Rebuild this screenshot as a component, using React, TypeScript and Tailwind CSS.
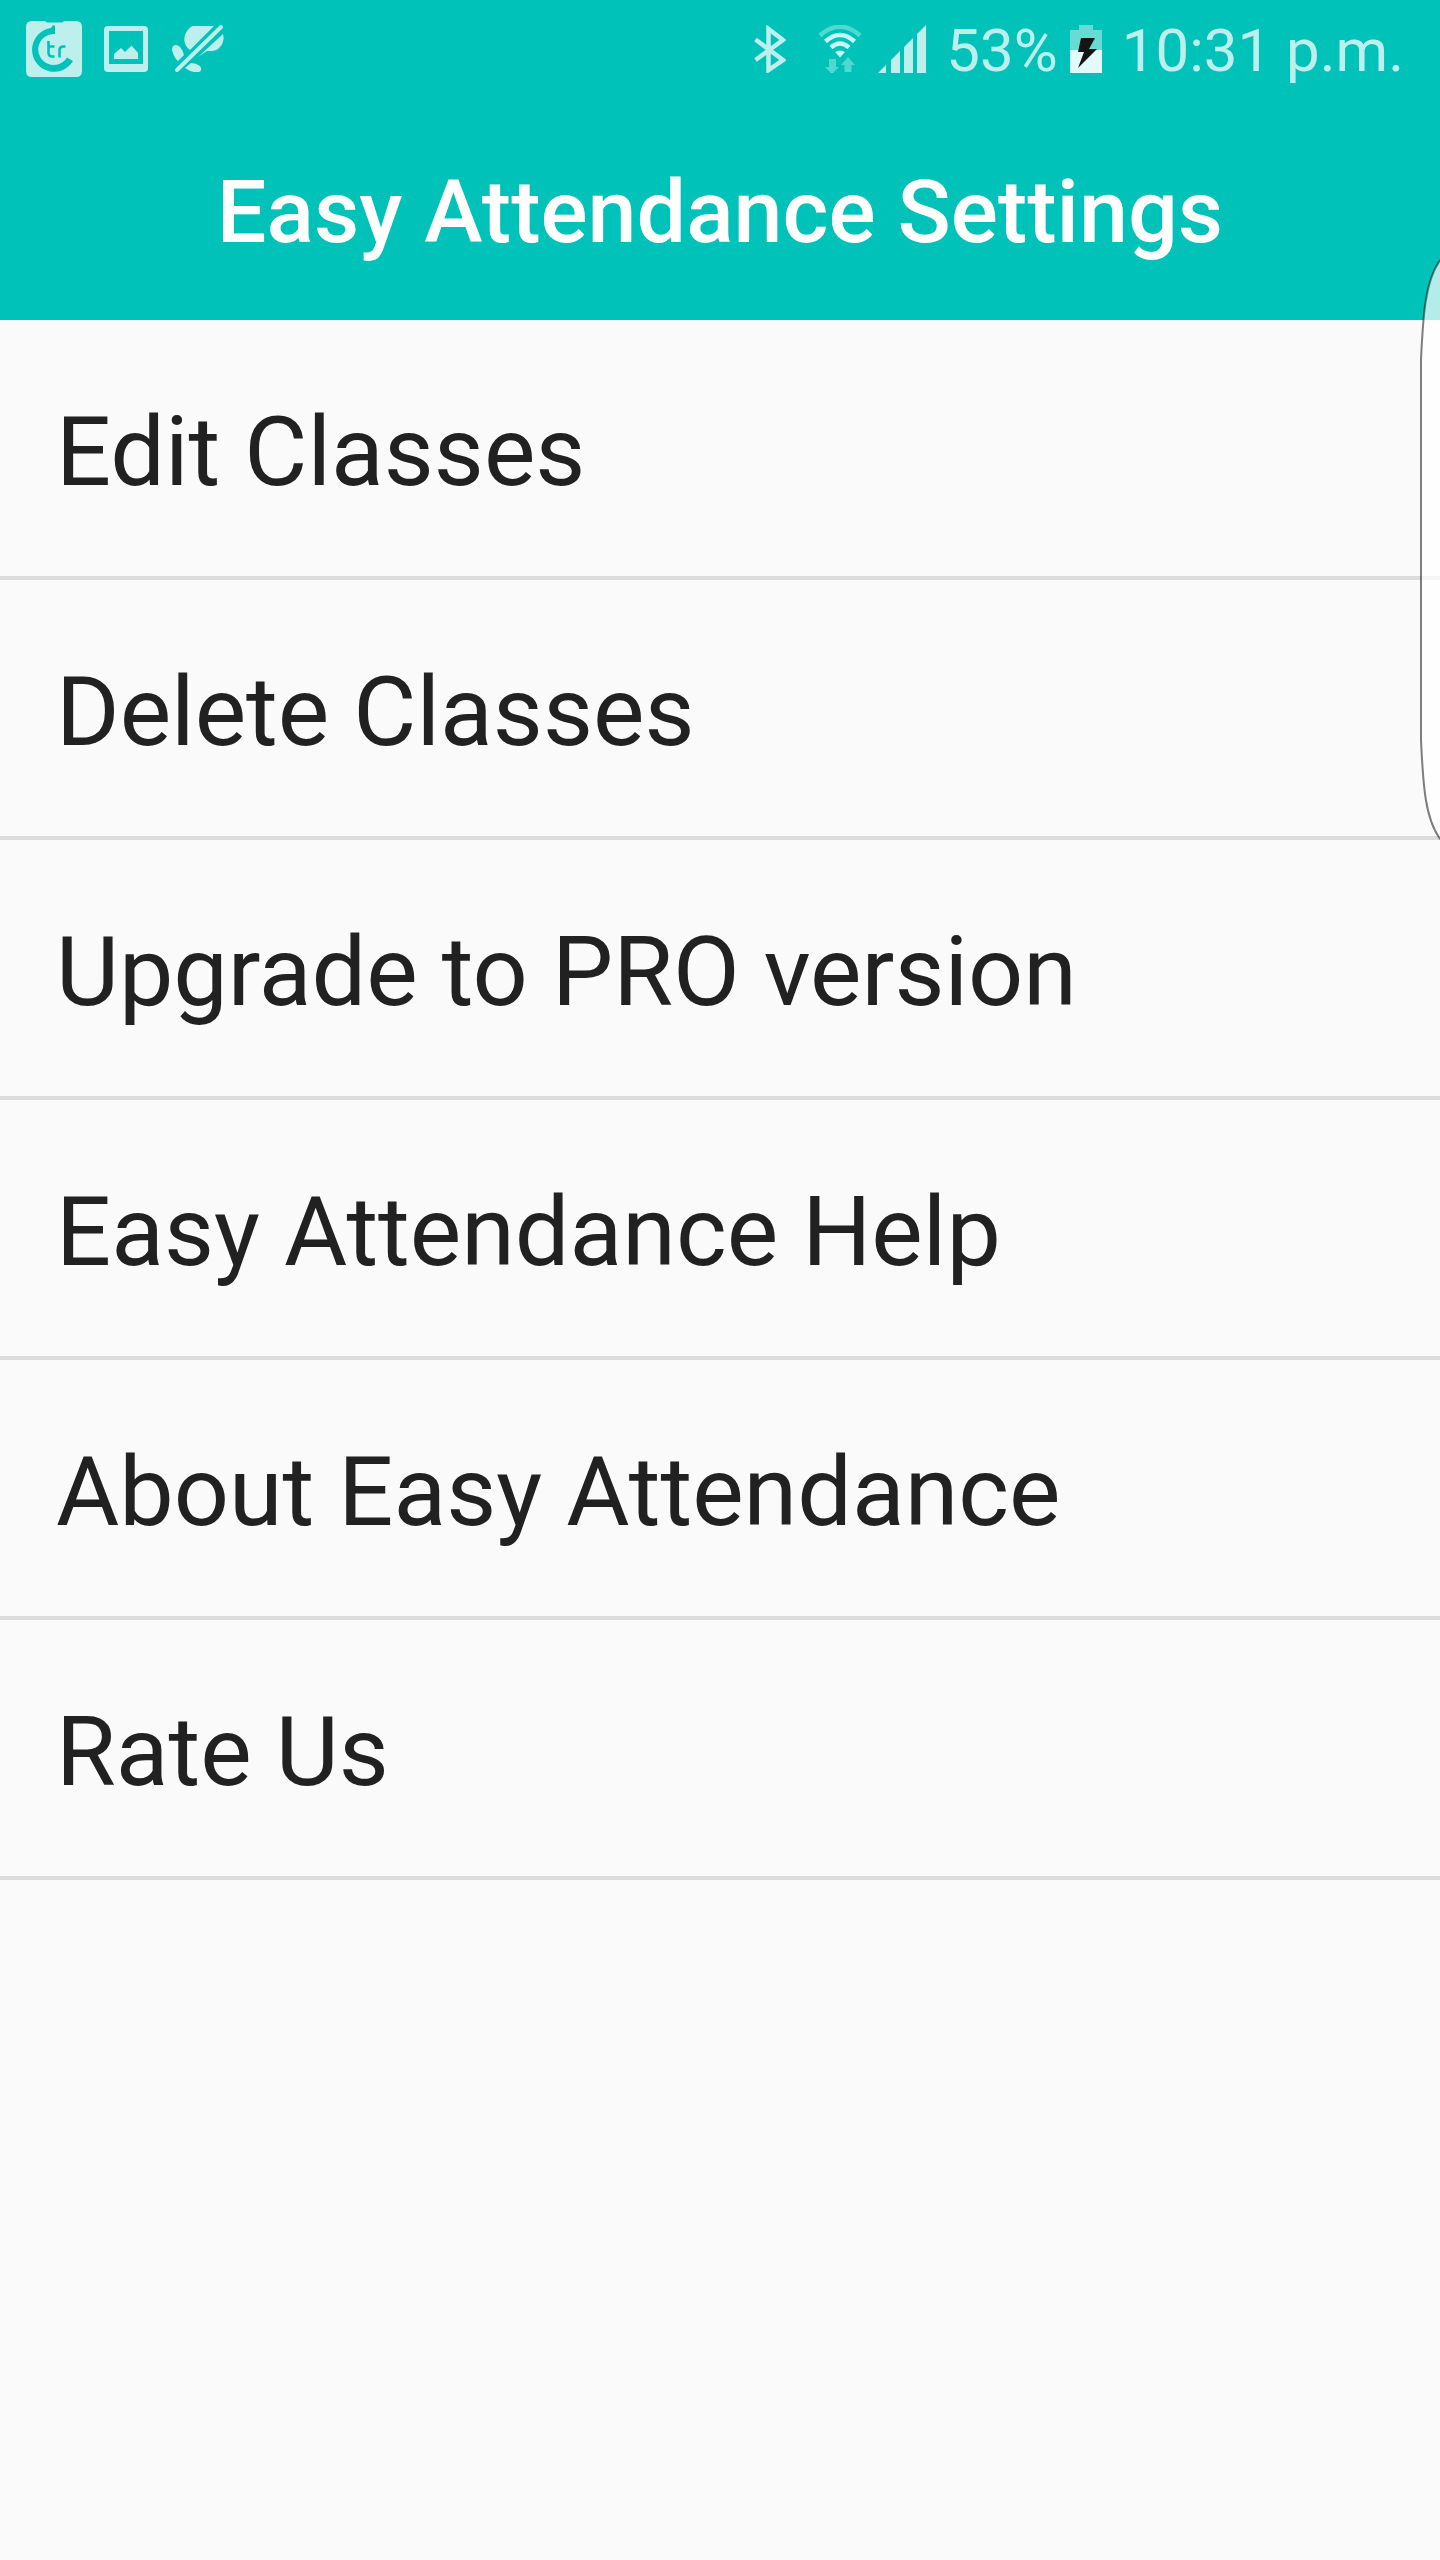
import React from "react";

const settings = [
  "Edit Classes",
  "Delete Classes",
  "Upgrade to PRO version",
  "Easy Attendance Help",
  "About Easy Attendance",
  "Rate Us",
];

function TrackerIcon() {
  return (
    <svg className="h-14 w-14 shrink-0" viewBox="0 0 56 56" aria-hidden="true">
      <path
        d="M6 0H19Q20 1.5 22 1.5H35Q37 1.5 38 0H50Q56 0 56 6V50Q56 56 50 56H6Q0 56 0 50V6Q0 0 6 0Z"
        fill="#bdf0ed"
      />
      <path
        d="M27 4L29 5V13A15.5 15.5 0 1 0 41 36.5L47 40A22 22 0 1 1 25 7Z"
        fill="#00c2b8"
      />
      <path
        d="M22.5 20V31.5Q22.5 35.5 26.5 35.5H28.5M22.5 25.5H28.5M33.5 36.5V29.5Q33.5 25.5 37.5 25.5H39.5"
        fill="none"
        stroke="#00c2b8"
        strokeWidth="2.6"
      />
    </svg>
  );
}

function PictureIcon() {
  return (
    <svg className="h-14 w-11 shrink-0" viewBox="0 0 44 56" aria-hidden="true">
      <path
        fillRule="evenodd"
        d="M4 5H40Q44 5 44 9V47Q44 51 40 51H4Q0 51 0 47V9Q0 5 4 5ZM5 10V43H39V10Z"
        fill="#bdf0ed"
      />
      <path d="M10 38V33L17 27L21 31L27.5 24.5L34 32V38Z" fill="#bdf0ed" />
    </svg>
  );
}

function SilencedIcon() {
  return (
    <svg className="h-14 w-13 shrink-0" viewBox="0 0 52 56" aria-hidden="true">
      <g fill="#bdf0ed">
        <path d="M22 5H42L18 29C11 24 11 16 15 10C17 7 19 5 22 5Z" />
        <path d="M51 13Q53 20 48 26Q45 30 39 30H35Q30 33 26 36Z" />
        <path d="M4 24Q9 24 12 34L6 40Q2 37 0 29Q0 24 4 24Z" />
        <path d="M19 42Q24 42 28 45Q31 49 27 51H22Q17 50 13 47Z" />
      </g>
      <path d="M5 49L49 6" stroke="#bdf0ed" strokeWidth="4" strokeLinecap="round" />
    </svg>
  );
}

function BluetoothIcon() {
  return (
    <svg className="h-12 w-8 shrink-0" viewBox="0 0 32 48" aria-hidden="true">
      <path
        d="M1.5 14.5L29 35L14.5 45V4L29 15L1.5 35"
        fill="none"
        stroke="#bdf0ed"
        strokeWidth="4.5"
      />
    </svg>
  );
}

function WifiIcon() {
  return (
    <svg className="h-12 w-11 shrink-0" viewBox="0 0 44 48" aria-hidden="true">
      <g fill="none" strokeWidth="4.5">
        <path d="M2 10.5Q22 -7 42 10.5" stroke="#4fd9d0" />
        <path d="M7.5 16.5Q22 3.5 36.5 16.5" stroke="#c8f8f5" />
        <path d="M13 22.5Q22 14.5 31 22.5" stroke="#c8f8f5" />
      </g>
      <path d="M17 27Q22 24 27 27L22 32.5Z" fill="#c8f8f5" />
      <path
        d="M11 34H18V42H21L14 49L7 42H11ZM23 40L30 32L37 40H33.5V47H26.5V40Z"
        fill="#4fd9d0"
      />
    </svg>
  );
}

function SignalIcon() {
  return (
    <svg className="h-12 w-12 shrink-0" viewBox="0 0 48 48" aria-hidden="true">
      <path
        d="M0 48L8 40V48ZM13 48V35L22 26V48ZM26 48V22L35 13V48ZM39 48V9L48 0V48Z"
        fill="#bdf0ed"
      />
    </svg>
  );
}

function BatteryIcon() {
  return (
    <svg className="h-12 w-8 shrink-0" viewBox="0 0 32 48" aria-hidden="true">
      <path d="M0 5H9V0H23V5H32V25H0Z" fill="#66dcd5" />
      <path d="M0 25H32V48H0Z" fill="#e3fafa" />
      <path d="M11 13H25L19 24H27L8 43L14 27H8Z" fill="#151515" />
    </svg>
  );
}

function StatusBar() {
  return (
    <div className="flex h-24 items-center justify-between pt-0.5 pr-9 pl-6.5 text-[60px] leading-none text-[#bdf0ed]">
      <div className="flex items-center gap-5.5">
        <TrackerIcon />
        <PictureIcon />
        <div className="ml-0.5">
          <SilencedIcon />
        </div>
      </div>
      <div className="flex items-center">
        <div className="mr-5 flex items-center gap-4">
          <div className="mr-4">
            <BluetoothIcon />
          </div>
          <WifiIcon />
          <SignalIcon />
        </div>
        <span className="mr-3 pt-1">53%</span>
        <BatteryIcon />
        <time className="ml-5 pt-1" dateTime="22:31">
          10:31 p.m.
        </time>
      </div>
    </div>
  );
}

function EdgeHandle() {
  return (
    <svg
      className="pointer-events-none absolute top-64 right-0 h-[588px] w-5"
      viewBox="0 0 20 588"
      aria-hidden="true"
    >
      <path
        d="M21 3C5 24 3 60 1 104V484C3 528 5 564 21 584"
        fill="#ffffff"
        fillOpacity="0.7"
        stroke="#000000"
        strokeOpacity="0.5"
        strokeWidth="2"
      />
    </svg>
  );
}

export default function App() {
  return (
    <div className="relative min-h-screen overflow-hidden bg-[#fafafa] font-[Roboto,sans-serif]">
      <header className="bg-[#00c2b8] text-white">
        <StatusBar />
        <h1 className="flex h-56 justify-center pt-14 text-[88px] leading-[120px] font-medium">
          Easy Attendance Settings
        </h1>
      </header>
      <main>
        <ul>
          {settings.map((label) => (
            <li key={label} className="border-b-4 border-[#dcdcdc]">
              <button
                type="button"
                className="block h-64 w-full px-14 pt-2 text-left text-[97px] leading-none text-[#212121]"
              >
                {label}
              </button>
            </li>
          ))}
        </ul>
      </main>
      <EdgeHandle />
    </div>
  );
}
